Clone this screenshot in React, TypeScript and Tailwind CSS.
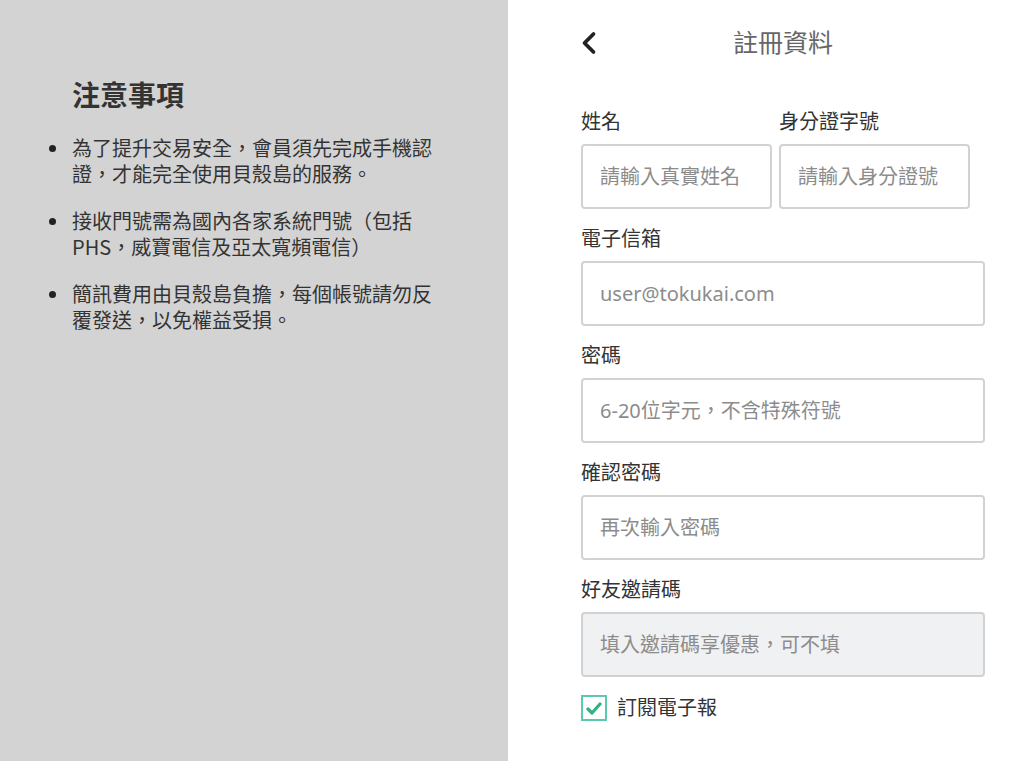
import { ChevronLeft } from "lucide-react"

const font = "font-['Noto_Sans','Noto_Sans_CJK_TC',sans-serif]"
const cjkFont = "font-['Noto_Sans_CJK_TC','Noto_Sans',sans-serif]"

const notes = [
	"為了提升交易安全，會員須先完成手機認證，才能完全使用貝殼島的服務。",
	"接收門號需為國內各家系統門號（包括PHS，威寶電信及亞太寬頻電信）",
	"簡訊費用由貝殼島負擔，每個帳號請勿反覆發送，以免權益受損。",
]

const inputCls =
	"w-full h-[65px] border-2 border-[#d2d2d2] rounded-[4px] px-[17px] text-[20px] text-[#333] outline-none placeholder:text-[#8c8c8c]"

const Field = ({
	label,
	placeholder,
	type = "text",
	muted = false,
}: {
	label: string
	placeholder: string
	type?: string
	muted?: boolean
}) => (
	<div className="flex flex-col mb-4">
		<label className="text-[20px] leading-[28px] text-[#333] mb-2">{label}</label>
		<input
			type={type}
			placeholder={placeholder}
			className={inputCls + (muted ? " bg-[#f0f1f3]" : " bg-white")}
		/>
	</div>
)

export default function App() {
	return (
		<div lang="zh-Hant-TW" className={"flex w-[1024px] h-[761px] overflow-hidden " + font}>
			<div className="w-[508px] h-full bg-[#d3d3d3] pt-[77px] pl-[49px]">
				<h2 className="ml-[23px] text-[28px] leading-[36px] font-bold text-[#333]">注意事項</h2>
				<ul className="mt-[22px] flex flex-col gap-[21px]">
					{notes.map((n) => (
						<li key={n} className="flex items-start gap-4">
							<span className="mt-[10px] w-[7px] h-[7px] rounded-full bg-[#222] shrink-0" />
							<p className={"w-[372px] text-[20px] leading-[26px] text-[#333] " + cjkFont}>{n}</p>
						</li>
					))}
				</ul>
			</div>

			<div className="flex-1 h-full bg-white pl-[73px]">
				<div className="w-[404px]">
					<div className="relative h-[86px] flex items-center justify-center">
						<button className="absolute left-[-10px] top-[25px] text-[#222]">
							<ChevronLeft size={36} strokeWidth={2.5} />
						</button>
						<h1 className="text-[25px] text-[#666]">註冊資料</h1>
					</div>

					<div className="pt-[22px]">
						<div className="flex gap-[7px] mb-4">
							<div className="flex flex-col w-[191px]">
								<label className="text-[20px] leading-[28px] text-[#333] mb-2">姓名</label>
								<input placeholder="請輸入真實姓名" className={inputCls + " bg-white"} />
							</div>
							<div className="flex flex-col w-[191px]">
								<label className="text-[20px] leading-[28px] text-[#333] mb-2">身分證字號</label>
								<input placeholder="請輸入身分證號" className={inputCls + " bg-white"} />
							</div>
						</div>
						<Field label="電子信箱" placeholder="user@tokukai.com" type="email" />
						<Field label="密碼" placeholder="6-20位字元，不含特殊符號" type="password" />
						<Field label="確認密碼" placeholder="再次輸入密碼" type="password" />
						<Field label="好友邀請碼" placeholder="填入邀請碼享優惠，可不填" muted />

						<label className="flex items-center gap-[10px] mt-[3px]">
							<span className="w-[26px] h-[26px] border-2 border-[#5cc8ae] flex items-center justify-center">
								<svg width="16" height="13" viewBox="0 0 16 13">
									<path d="M2 7 L6 11 L14 2" fill="none" stroke="#2fb383" strokeWidth="3.2" strokeLinecap="round" strokeLinejoin="round" />
								</svg>
							</span>
							<span className="text-[20px] text-[#333]">訂閱電子報</span>
						</label>
					</div>
				</div>
			</div>
		</div>
	)
}
